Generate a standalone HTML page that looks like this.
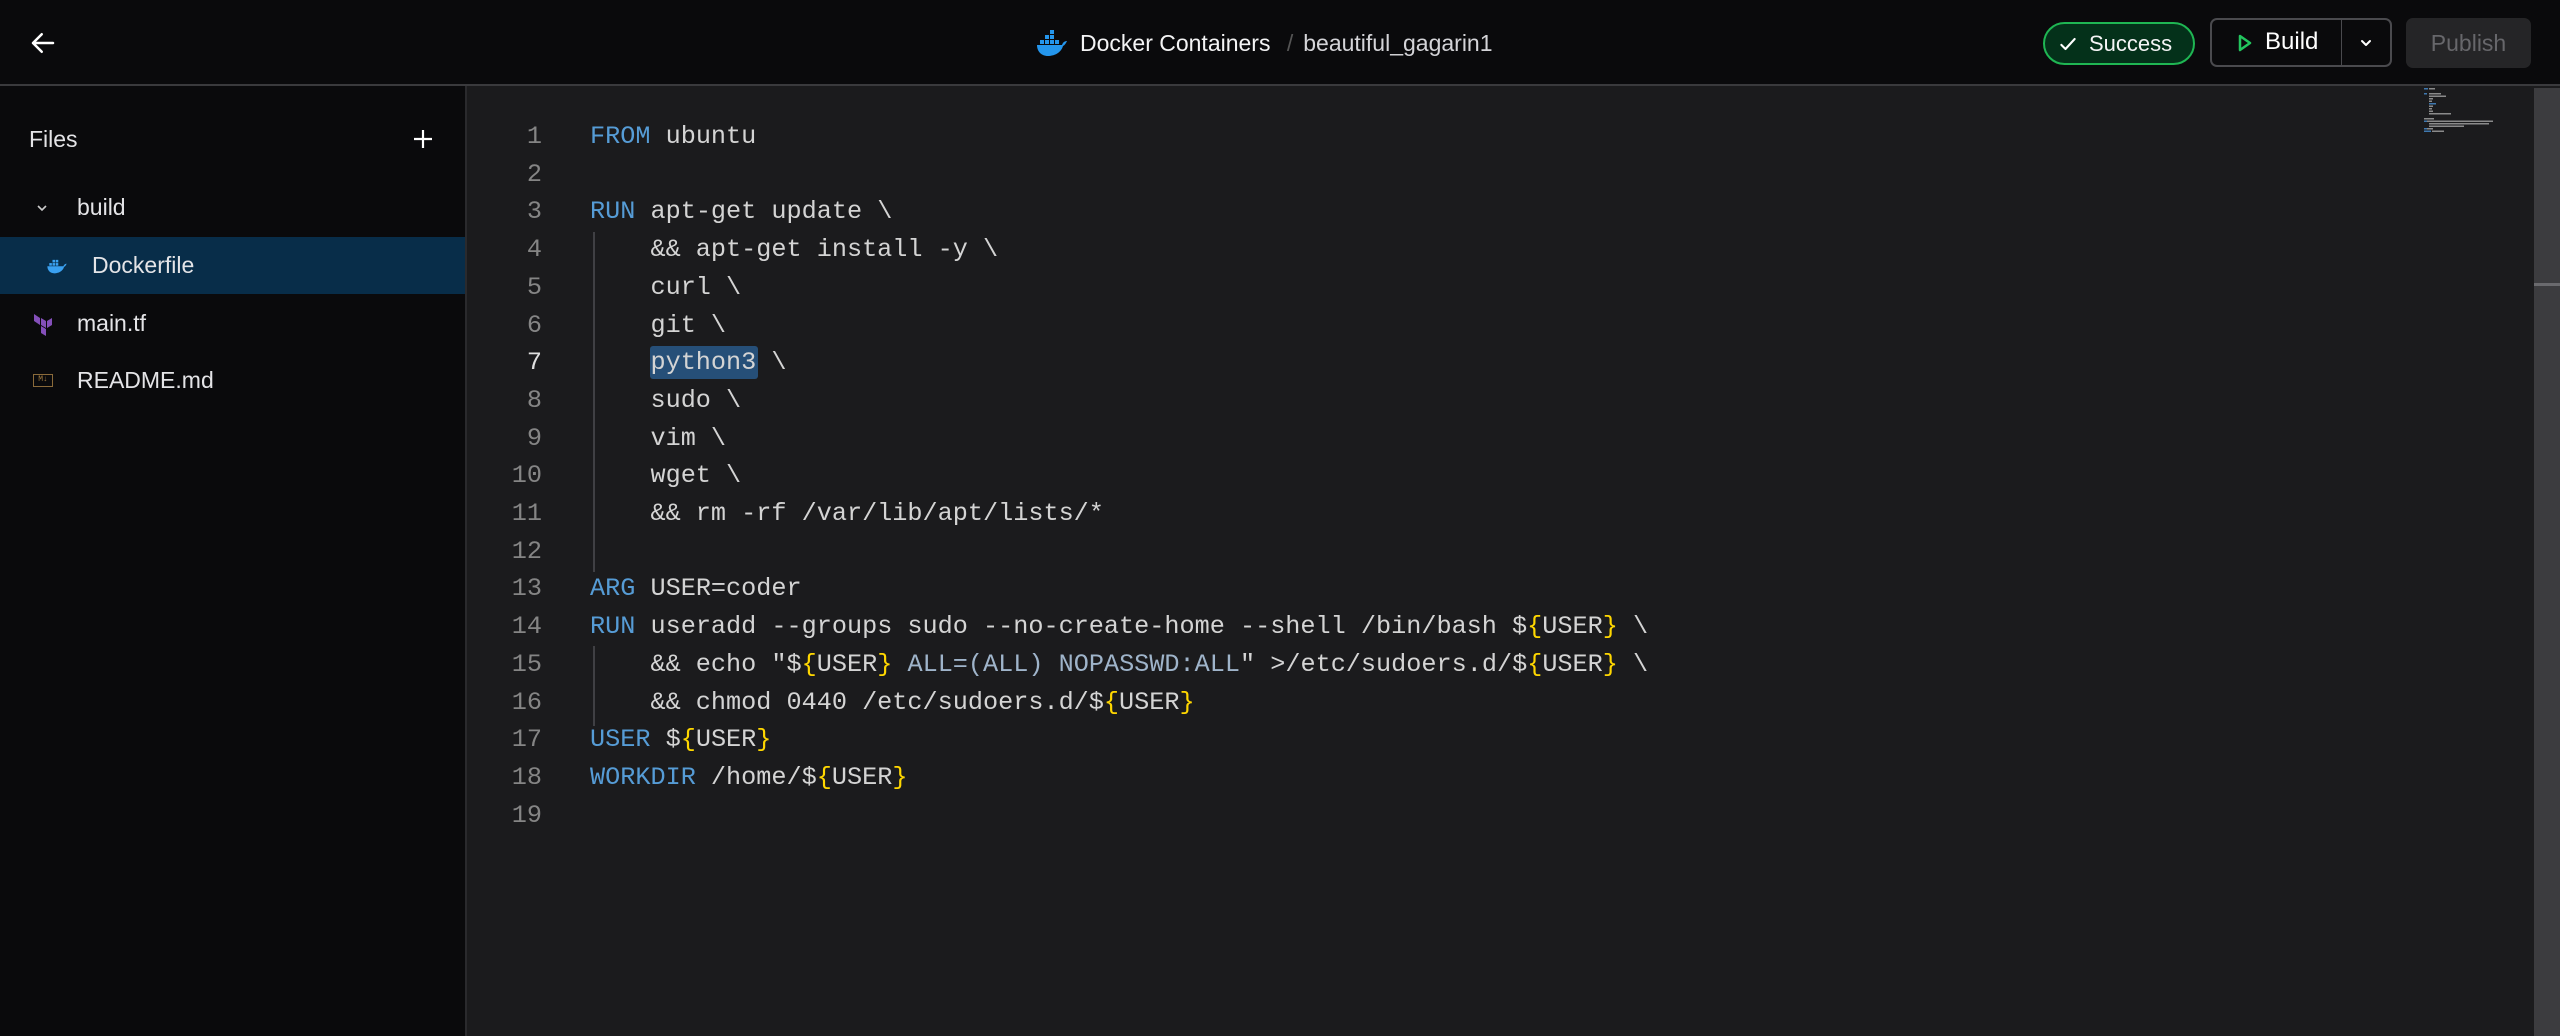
<!DOCTYPE html>
<html><head><meta charset="utf-8"><style>
*{margin:0;padding:0;box-sizing:border-box}
body{width:2560px;height:1036px;background:#1b1b1d;overflow:hidden;font-family:"Liberation Sans",sans-serif;color:#e4e4e7;position:relative}
.hdr{position:absolute;left:0;top:0;width:2560px;height:86px;background:#0a0a0c;border-bottom:2px solid #3a3a3d}
.side{position:absolute;left:0;top:86px;width:467px;height:950px;background:#0a0a0c;border-right:2px solid #2a2a2d}
.ab{position:absolute}
.row{position:absolute;left:0;width:465px;height:57px;font-size:23px;line-height:57px;color:#e4e4e7}
.code{position:absolute;left:0;top:118px;font-family:"Liberation Mono",monospace;font-size:25.2px;line-height:37.7px;color:#d4d4d4;white-space:pre}
.ln{position:absolute;left:490px;width:52px;text-align:right;color:#858585}
.tx{position:absolute;left:590px}
.k{color:#569cd6}.b{color:#ffd700}.s{color:#9fb4ca}
.guide{position:absolute;left:593px;width:2px;background:#404044}
</style></head><body>
<div class="hdr">
 <svg class="ab" style="left:28px;top:28px" width="30" height="30" viewBox="0 0 24 24" fill="none" stroke="#fff" stroke-width="2" stroke-linecap="round" stroke-linejoin="round"><path d="M20 12H4M11 5l-7 7 7 7"/></svg>
 <svg class="ab" style="left:1036px;top:29px" width="32" height="28" viewBox="0 0 32 28"><g fill="#2496ed"><rect x="9" y="6" width="4" height="4"/><rect x="14" y="6" width="4" height="4"/><rect x="14" y="1" width="4" height="4"/><rect x="4" y="11" width="4" height="4"/><rect x="9" y="11" width="4" height="4"/><rect x="14" y="11" width="4" height="4"/><rect x="19" y="11" width="4" height="4"/><path d="M1 16h25c1-3 3-4 5-4-1 2-2 4-4 5-2 7-9 10-15 10C5 27 1 22 1 16z"/></g></svg>
 <div class="ab" style="left:1080px;top:28px;font-size:23px;line-height:30px;color:#f4f4f5">Docker Containers <span style="color:#555;margin:0 10px">/</span><span style="color:#d4d4d8">beautiful_gagarin1</span></div>
 <div class="ab" style="left:2043px;top:22px;width:152px;height:43px;border-radius:22px;background:#04311a;border:2px solid #1fb653;font-size:22px;line-height:39px;color:#f4f4f5;padding-left:44px">Success</div>
 <svg class="ab" style="left:2058px;top:34px" width="20" height="20" viewBox="0 0 24 24" fill="none" stroke="#fff" stroke-width="2.5" stroke-linecap="round" stroke-linejoin="round"><path d="M4 13l5 5L20 6"/></svg>
 <div class="ab" style="left:2210px;top:18px;width:182px;height:49px;border-radius:7px;border:2px solid #4a4a4e;background:#0a0a0c"></div>
 <div class="ab" style="left:2341px;top:19px;width:1px;height:47px;background:#4a4a4e"></div>
 <svg class="ab" style="left:2237px;top:34px" width="16" height="18" viewBox="0 0 16 18" fill="none" stroke="#22c55e" stroke-width="2.5" stroke-linejoin="round"><path d="M3 2l10 7-10 7z"/></svg>
 <div class="ab" style="left:2265px;top:27px;font-size:24px;line-height:30px;color:#fff">Build</div>
 <svg class="ab" style="left:2358px;top:35px" width="16" height="16" viewBox="0 0 24 24" fill="none" stroke="#fff" stroke-width="3" stroke-linecap="round" stroke-linejoin="round"><path d="M6 9l6 6 6-6"/></svg>
 <div class="ab" style="left:2406px;top:18px;width:125px;height:50px;border-radius:7px;background:#252527;font-size:23px;line-height:50px;text-align:center;color:#67676b">Publish</div>
</div>
<div class="side">
 <div class="ab" style="left:29px;top:38px;font-size:23px;line-height:30px">Files</div>
 <svg class="ab" style="left:412px;top:42px" width="22" height="22" viewBox="0 0 22 22" stroke="#fff" stroke-width="2.2"><path d="M11 2v18M2 11h18"/></svg>
 <div class="row" style="top:93px;padding-left:77px">build</div>
 <svg class="ab" style="left:36px;top:117px" width="12" height="10" viewBox="0 0 12 10" fill="none" stroke="#ccc" stroke-width="1.6"><path d="M2 3l4 4 4-4"/></svg>
 <div class="row" style="top:151px;padding-left:92px;background:#082d49">Dockerfile</div>
 <svg class="ab" style="left:46px;top:170px" width="22" height="18" viewBox="0 0 32 28"><g fill="#3aa0f0"><rect x="9" y="6" width="4" height="4"/><rect x="14" y="6" width="4" height="4"/><rect x="4" y="11" width="4" height="4"/><rect x="9" y="11" width="4" height="4"/><rect x="14" y="11" width="4" height="4"/><path d="M1 16h25c1-3 3-4 5-4-1 2-2 4-4 5-2 7-9 10-15 10C5 27 1 22 1 16z"/></g></svg>
 <div class="row" style="top:209px;padding-left:77px">main.tf</div>
 <svg class="ab" style="left:33px;top:227px" width="20" height="24" viewBox="0 0 20 24" fill="#844fba"><path d="M1 1l6 4v7L1 8zM8 5l5 3v7L8 12zM14 8l5-3v7l-5 3zM8 13l5 3v7l-5-3z"/></svg>
 <div class="row" style="top:266px;padding-left:77px">README.md</div>
 <div class="ab" style="left:33px;top:288px;width:20px;height:13px;border:1.5px solid #8a6a3a;font-size:8px;line-height:10px;color:#a07a40;text-align:center;font-family:'Liberation Mono',monospace">M↓</div>
</div>
<div class="guide" style="top:232px;height:340px"></div>
<div class="guide" style="top:646px;height:80px"></div>
<div class="ab" style="left:650px;top:346px;width:108px;height:33px;background:#264f78;border-radius:3px"></div>
<div class="code">
<div class="ln" style="top:0">1</div><div class="tx" style="top:0"><span class="k">FROM</span> ubuntu</div>
<div class="ln" style="top:37.7px">2</div>
<div class="ln" style="top:75.4px">3</div><div class="tx" style="top:75.4px"><span class="k">RUN</span> apt-get update \</div>
<div class="ln" style="top:113.1px">4</div><div class="tx" style="top:113.1px">    &amp;&amp; apt-get install -y \</div>
<div class="ln" style="top:150.8px">5</div><div class="tx" style="top:150.8px">    curl \</div>
<div class="ln" style="top:188.5px">6</div><div class="tx" style="top:188.5px">    git \</div>
<div class="ln" style="top:226.2px;color:#e0e0e0">7</div><div class="tx" style="top:226.2px">    python3 \</div>
<div class="ln" style="top:263.9px">8</div><div class="tx" style="top:263.9px">    sudo \</div>
<div class="ln" style="top:301.6px">9</div><div class="tx" style="top:301.6px">    vim \</div>
<div class="ln" style="top:339.3px">10</div><div class="tx" style="top:339.3px">    wget \</div>
<div class="ln" style="top:377px">11</div><div class="tx" style="top:377px">    &amp;&amp; rm -rf /var/lib/apt/lists/*</div>
<div class="ln" style="top:414.7px">12</div>
<div class="ln" style="top:452.4px">13</div><div class="tx" style="top:452.4px"><span class="k">ARG</span> USER=coder</div>
<div class="ln" style="top:490.1px">14</div><div class="tx" style="top:490.1px"><span class="k">RUN</span> useradd --groups sudo --no-create-home --shell /bin/bash $<span class="b">{</span>USER<span class="b">}</span> \</div>
<div class="ln" style="top:527.8px">15</div><div class="tx" style="top:527.8px">    &amp;&amp; echo "$<span class="b">{</span>USER<span class="b">}</span><span class="s"> ALL=(ALL) NOPASSWD:ALL</span>" &gt;/etc/sudoers.d/$<span class="b">{</span>USER<span class="b">}</span> \</div>
<div class="ln" style="top:565.5px">16</div><div class="tx" style="top:565.5px">    &amp;&amp; chmod 0440 /etc/sudoers.d/$<span class="b">{</span>USER<span class="b">}</span></div>
<div class="ln" style="top:603.2px">17</div><div class="tx" style="top:603.2px"><span class="k">USER</span> $<span class="b">{</span>USER<span class="b">}</span></div>
<div class="ln" style="top:640.9px">18</div><div class="tx" style="top:640.9px"><span class="k">WORKDIR</span> /home/$<span class="b">{</span>USER<span class="b">}</span></div>
<div class="ln" style="top:678.6px">19</div>
</div>
<div class="ab" style="left:2534px;top:88px;width:26px;height:948px;background:#3c3c3f"></div>
<div class="ab" style="left:2534px;top:283px;width:26px;height:3px;background:#6a6a6e"></div>
<svg class="ab" style="left:2424px;top:86px" width="100" height="50" viewBox="0 0 100 50">
<g fill="#8a8a8a"><rect x="5" y="2" width="6" height="1.5"/><rect x="5" y="7" width="12" height="1.5"/><rect x="5" y="9.5" width="17" height="1.5"/><rect x="5" y="12" width="4" height="1.5"/><rect x="5" y="14.5" width="3" height="1.5"/><rect x="5" y="19.5" width="4" height="1.5"/><rect x="5" y="22" width="3" height="1.5"/><rect x="5" y="24.5" width="4" height="1.5"/><rect x="5" y="27" width="22" height="1.5"/><rect x="0" y="32" width="10" height="1.5"/><rect x="3" y="34.5" width="66" height="1.5"/><rect x="5" y="37" width="60" height="1.5"/><rect x="5" y="39.5" width="35" height="1.5"/><rect x="3" y="42" width="6" height="1.5"/><rect x="8" y="44.5" width="12" height="1.5"/></g>
<g fill="#3f78b0"><rect x="0" y="2" width="4" height="1.5"/><rect x="0" y="7" width="3" height="1.5"/><rect x="5" y="17" width="7" height="1.5"/><rect x="0" y="34.5" width="3" height="1.5"/><rect x="0" y="42" width="3" height="1.5"/><rect x="0" y="44.5" width="7" height="1.5"/></g>
</svg>
</body></html>
